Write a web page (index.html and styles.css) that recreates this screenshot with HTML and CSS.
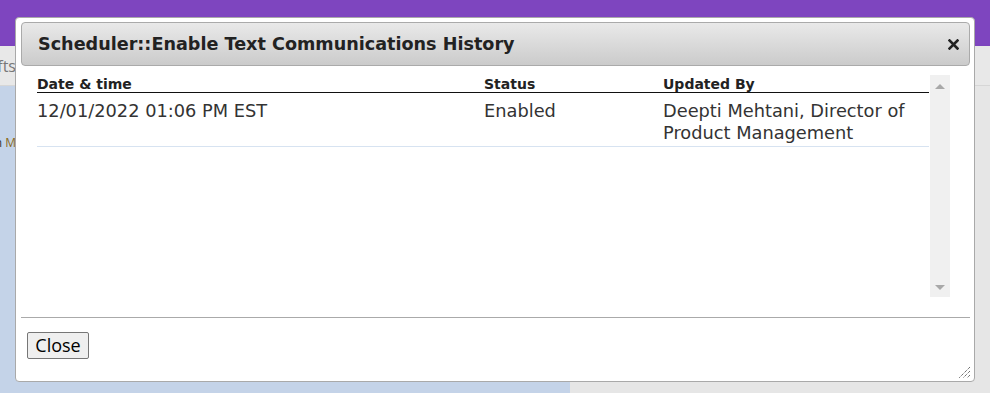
FILE: index.html
```html
<!DOCTYPE html>
<html lang="en">
<head>
  <meta charset="UTF-8">
  <title>Scheduler</title>
  <link rel="stylesheet" href="styles.css">
</head>
<body>

<!-- page behind the dialog -->
<div class="app">
  <header class="topbar"></header>
  <nav class="tabs"><span class="clip"><span>Shifts</span></span></nav>
  <div class="main">
    <aside class="side">
      <span class="clip side-link"><span>Admin <b>M</b></span></span>
    </aside>
    <div class="work"></div>
  </div>
</div>

<!-- History dialog -->
<div class="dialog">
  <div class="dialog-title">
    <span class="dialog-title-text">Scheduler::Enable Text Communications History</span>
    <span class="dialog-x">
      <svg width="11" height="11" viewBox="0 0 11 11"><path d="M1.5 1.5 L9.5 9.5 M9.5 1.5 L1.5 9.5" stroke="#222" stroke-width="2.6" stroke-linecap="square"/></svg>
    </span>
  </div>

  <div class="dialog-content">
    <div class="grid-wrap">
      <table class="grid">
        <thead>
          <tr>
            <th class="col-date">Date &amp; time</th>
            <th class="col-status">Status</th>
            <th class="col-by">Updated By</th>
          </tr>
        </thead>
        <tbody>
          <tr>
            <td>12/01/2022 01:06 PM EST</td>
            <td>Enabled</td>
            <td>Deepti Mehtani, Director of Product Management</td>
          </tr>
        </tbody>
      </table>
      <div class="scrollbar">
        <span class="arrow-up"></span>
        <span class="arrow-down"></span>
      </div>
    </div>
  </div>

  <div class="dialog-buttons">
    <button class="btn">Close</button>
  </div>

  <svg class="grip" width="13" height="13" viewBox="0 0 13 13">
    <path d="M12 1 L1 12 M12 5 L5 12 M12 9 L9 12" stroke="#333" stroke-width="1" stroke-dasharray="1 1"/>
  </svg>
</div>

</body>
</html>
```

FILE: styles.css
```css
* { box-sizing: border-box; }

html, body {
  margin: 0;
  height: 100%;
  font-family: "DejaVu Sans", Verdana, sans-serif;
  background: #e6e6e6;
  overflow: hidden;
}

.app {
  display: flex;
  flex-direction: column;
  height: 100%;
}

.topbar {
  height: 46px;
  background: #7e45bf;
}

.tabs {
  height: 40px;
  background: #e8e8e8;
  border-bottom: 1px solid #d6d6d6;
  box-shadow: 0 2px 5px rgba(0, 0, 0, 0.08);
  display: flex;
  align-items: center;
  font-family: "Open Sans", sans-serif;
  font-size: 16px;
  color: #777;
}

/* text that runs in under the dialog */
.clip {
  display: flex;
  justify-content: flex-end;
  width: 16px;
  overflow: hidden;
  white-space: nowrap;
}

.clip span { flex-shrink: 0; }

.main {
  flex: 1;
  display: flex;
}

.side {
  width: 570px;
  background: #c4d3e8;
  padding-top: 48px;
}

.side-link {
  font-family: "Open Sans", sans-serif;
  font-size: 12px;
  color: #333;
}

.side-link b {
  font-weight: normal;
  color: #8a6a1a;
}

.work {
  flex: 1;
  background: #e6e6e6;
}

/* dialog */
.dialog {
  position: absolute;
  left: 15px;
  top: 17px;
  width: 960px;
  height: 365px;
  background: #fff;
  border: 1px solid #a9a9a9;
  border-radius: 4px;
  padding: 4px 4px 0 5px;
  display: flex;
  flex-direction: column;
}

.dialog-title {
  height: 44px;
  border: 1px solid #aaa;
  border-radius: 4px;
  background: linear-gradient(#e9e9e9, #cbcbcb);
  display: flex;
  align-items: center;
  justify-content: space-between;
  padding: 0 10px 1px 16px;
}

.dialog-title-text {
  font-weight: bold;
  font-size: 17.6px;
  color: #222;
}

.dialog-x {
  display: flex;
  margin-top: 2px;
}

.dialog-content {
  padding: 9px 19px 18px 16px;
  height: 251px;
}

.grid-wrap {
  display: flex;
  height: 222px;
}

.grid {
  width: 892px;
  border-collapse: collapse;
  align-self: flex-start;
  color: #333;
}

.grid th {
  text-align: left;
  font-size: 14px;
  line-height: 16px;
  padding: 1px 0 0;
  color: #222;
  border-bottom: 1px solid #111;
}

.col-date { width: 447px; }
.col-status { width: 179px; }

.grid td {
  font-size: 17.8px;
  line-height: 22px;
  padding: 7px 0 2px;
  vertical-align: top;
  border-bottom: 1px solid #d7e3f1;
}

.scrollbar {
  width: 20px;
  margin-left: 1px;
  background: #f0f0f0;
  display: flex;
  flex-direction: column;
  justify-content: space-between;
  align-items: center;
  padding: 9px 0 7px;
}

.arrow-up, .arrow-down {
  width: 0;
  height: 0;
  border-left: 5px solid transparent;
  border-right: 5px solid transparent;
}

.arrow-up { border-bottom: 5px solid #a8a8a8; }
.arrow-down { border-top: 5px solid #a8a8a8; }

.dialog-buttons {
  border-top: 1px solid #aaa;
  padding: 14px 6px;
}

.btn {
  font-family: "Open Sans", sans-serif;
  font-size: 18px;
  line-height: 21px;
  color: #000;
  background: #efefef;
  border: 1px solid #767676;
  border-radius: 2px;
  padding: 1px 0 2px;
  height: 27px;
  width: 62px;
}

.grip {
  position: absolute;
  right: 3px;
  bottom: 2px;
}
```
